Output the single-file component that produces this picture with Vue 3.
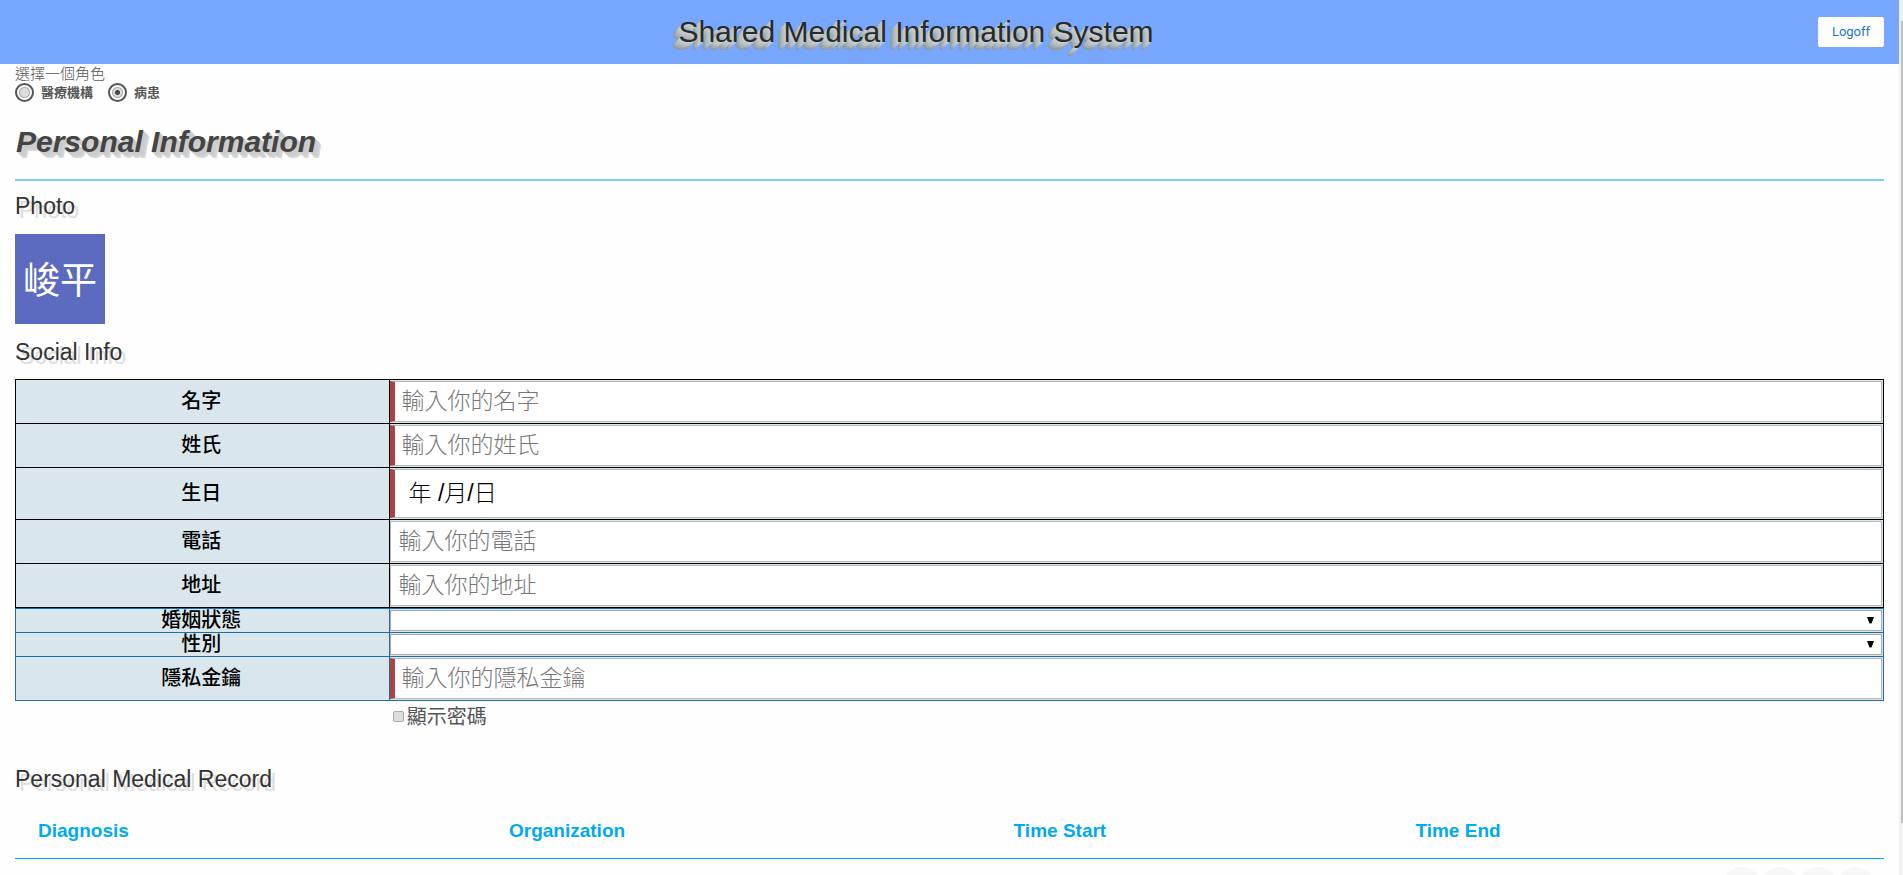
<script setup>
import { ref } from 'vue'

const role = ref('patient')
const showKey = ref(false)
const fields = [
  { id: 'first', label: '名字', hint: '輸入你的名字', required: true },
  { id: 'last', label: '姓氏', hint: '輸入你的姓氏', required: true },
  { id: 'birth', label: '生日', value: '年 /月/日', required: true, tall: true },
  { id: 'phone', label: '電話', hint: '輸入你的電話' },
  { id: 'address', label: '地址', hint: '輸入你的地址' },
]
const choices = [
  { id: 'marital', label: '婚姻狀態' },
  { id: 'gender', label: '性別' },
]
</script>

<template>
  <div class="window">
    <div class="page">
      <header class="bar">
        <h1>Shared Medical Information System</h1>
        <button type="button" class="logoff">Logoff</button>
      </header>
      <main>
        <fieldset class="roles">
          <legend>選擇一個角色</legend>
          <label><input v-model="role" type="radio" name="role" value="clinic" /><span>醫療機構</span></label>
          <label><input v-model="role" type="radio" name="role" value="patient" /><span>病患</span></label>
        </fieldset>
        <h2>Personal Information</h2>
        <h3>Photo</h3>
        <div class="photo">峻平</div>
        <h3 class="social">Social Info</h3>
        <table class="info dark">
          <tbody>
            <tr v-for="f in fields" :key="f.id">
              <th scope="row"><label :for="f.id">{{ f.label }}</label></th>
              <td>
                <input :id="f.id" type="text" :placeholder="f.hint" :value="f.value" :class="{ required: f.required, tall: f.tall }" />
              </td>
            </tr>
          </tbody>
        </table>
        <table class="info blue">
          <tbody>
            <tr v-for="c in choices" :key="c.id">
              <th scope="row"><label :for="c.id">{{ c.label }}</label></th>
              <td>
                <div class="select">
                  <select :id="c.id"><option></option></select>
                  <svg width="7" height="7" viewBox="0 0 7 7" aria-hidden="true"><path d="M0 0H7L4.500 6.500H2.500Z" /></svg>
                </div>
              </td>
            </tr>
            <tr>
              <th scope="row"><label for="key">隱私金鑰</label></th>
              <td><input id="key" class="required" type="text" placeholder="輸入你的隱私金鑰" /></td>
            </tr>
          </tbody>
        </table>
        <div class="show"><label><input v-model="showKey" type="checkbox" />顯示密碼</label></div>
        <h3 class="record-title">Personal Medical Record</h3>
        <table class="records">
          <thead>
            <tr>
              <th class="c1" scope="col">Diagnosis</th>
              <th class="c2" scope="col">Organization</th>
              <th class="c3" scope="col">Time Start</th>
              <th class="c4" scope="col">Time End</th>
            </tr>
          </thead>
        </table>
        <div class="dots"><i></i><i></i><i></i><i></i></div>
      </main>
    </div>
    <div class="track"><div class="thumb"></div></div>
  </div>
</template>

<style>
body { margin: 0; overflow: hidden; }
</style>

<style scoped>
* { box-sizing: border-box; }
.window {
  display: flex;
  height: 100vh;
  overflow: hidden;
  background: #fefefe;
  color: #555;
  font-family: "Liberation Sans", "Noto Sans CJK TC", sans-serif;
}
.page { flex: 1; min-width: 0; }
.track { width: 4px; padding: 21px 0 52px 2px; background: #f1f1f1; }
.thumb { height: 100%; background: #c1c1c1; }
.bar {
  display: grid;
  grid-template-columns: 1fr auto 1fr;
  align-items: center;
  height: 64px;
  padding-right: 15px;
  background: #78a7ff;
}
h1, h2, h3 { margin: 0; }
h1 {
  grid-column: 2;
  padding-right: 52px;
  color: #262b2e;
  font-size: 30px;
  font-weight: 400;
  line-height: 36px;
  text-shadow: -1px 1px #c5cdcf, -2px 2px #c0c8ca, -3px 3px #bac3c5, -4px 4px #b3bcbf, -5px 5px #aab4b7, -6px 6px #a1abae, -7px 7px #98a3a6, -7px 8px #8f9a9e;
}
.logoff {
  justify-self: end;
  width: 66px;
  height: 30px;
  padding: 0;
  border: 0;
  border-radius: 2px;
  background: #fff;
  color: #1976d2;
  font: 13px/30px Roboto, sans-serif;
}
main { padding: 0 15px; }
.roles { display: flex; margin: 0; padding: 0; border: 0; }
.roles legend { padding: 0; font: 300 15px/18px "Noto Sans CJK TC", sans-serif; }
.roles label { display: flex; align-items: center; gap: 7px; height: 20px; margin-right: 15px; font: 700 13px/18px "Noto Sans CJK TC", sans-serif; }
.roles input {
  appearance: none;
  width: 19px;
  height: 19px;
  margin: 0;
  border: 2px solid #555;
  border-radius: 50%;
  background: radial-gradient(circle, #ddd 0 4px, #aaa 5px, #fff 6px);
}
.roles input:checked { background: radial-gradient(circle, #444 0 2px, #ddd 3px 4px, #aaa 5px, #fff 6px); }
h2 {
  margin-top: 17px;
  height: 62px;
  padding-left: 1px;
  border-bottom: 2px solid #87ceeb;
  color: #444;
  font: italic 700 30px/46px "Liberation Sans", sans-serif;
  text-shadow: 1px 1px #ccc, 2px 2px #ccc, 3px 3px #ccc, 4px 4px #d0d0d0, 5px 5px #d4d4d4, 6px 6px #d8d8d8;
}
h3 {
  color: #333;
  font-size: 23px;
  font-weight: 400;
  line-height: 30px;
  text-shadow: 4px 4px #ddd;
}
h2 + h3 { margin-top: 10px; }
.photo {
  width: 90px;
  height: 90px;
  margin-top: 13px;
  background: #5c6bc0;
  color: #fff;
  font: 37px/88px "Noto Sans CJK TC", sans-serif;
  text-align: center;
}
.social { margin: 13px 0 12px; }
.info { width: 100%; border-collapse: collapse; table-layout: fixed; }
.info th, .info td { padding: 1px; border: 1px solid #000; background: #d9e6eb; }
.blue th, .blue td { border-color: #1c6ea4; }
.info th { width: 20%; padding: 0 2px 2px 0; color: #000; font: 500 20px/20px "Liberation Sans", "Noto Sans CJK TC", sans-serif; }
.info th label { display: block; }
.info td { padding-left: 0; }
.info td input {
  display: block;
  width: 100%;
  height: 41px;
  margin: 0;
  padding: 0 8px;
  border: 1px solid #b8b8b8;
  background: #fff;
  color: #000;
  font: 300 23px/30px "Liberation Sans", "Noto Sans CJK TC", sans-serif;
}
.info td input::placeholder { color: #777; opacity: 1; }
.info td .required { border-left: 5px solid #a44; padding-left: 7px; }
.info td .tall { height: 49px; padding-left: 14px; padding-bottom: 6px; }
.select { position: relative; }
.select select {
  appearance: none;
  display: block;
  width: 100%;
  height: 21px;
  border: 1px solid #a9a9a9;
  border-radius: 0;
  background: #fff;
}
.select svg { position: absolute; top: 7px; right: 8px; pointer-events: none; }
.show { margin-left: 20%; padding: 2px 0 0 4px; }
.show label { display: inline-flex; align-items: center; gap: 3px; font: 20px/26px "Noto Sans CJK TC", sans-serif; }
.show input { appearance: none; width: 11px; height: 11px; margin: 0; border: 1px solid #aaa; border-radius: 2px; background: #ddd; }
.record-title { margin-top: 35px; }
.records { width: 100%; margin-top: 13px; border-collapse: collapse; table-layout: fixed; }
.records th {
  height: 51px;
  padding: 0 23px 2px;
  border-bottom: 1px solid #0ae;
  color: #0ae;
  font-size: 19px;
  line-height: 24px;
  text-align: left;
}
.c1 { width: 25.2%; }
.c2 { width: 27%; }
.c3 { width: 21.5%; }
.dots { display: flex; justify-content: flex-end; gap: 0; padding: 8px 9px 0 0; }
.dots i { width: 38px; height: 38px; border-radius: 50%; background: #f7f7f7; }
</style>
